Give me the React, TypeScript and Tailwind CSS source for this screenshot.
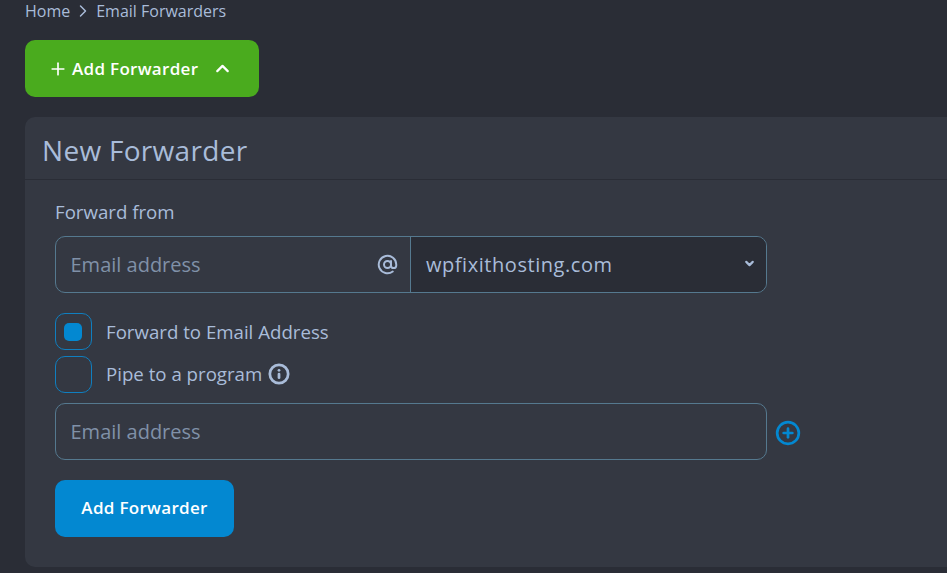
import React from 'react';
import { ChevronRight, ChevronUp, ChevronDown, Plus, AtSign, Info, CirclePlus } from 'lucide-react';

const font = "font-['Open_Sans',sans-serif]";

const RadioBox: React.FC<{ checked?: boolean; label: string; labelClass?: string; children?: React.ReactNode }> = ({ checked, label, labelClass, children }) => (
  <div className="flex items-center h-[37px]">
    <div className="w-[37px] h-[37px] rounded-[10px] border border-[#0f7fc0] flex items-center justify-center">
      {checked && <div className="w-[18px] h-[18px] mr-[1px] rounded-[5px] bg-[#0388d1]" />}
    </div>
    <span className={`ml-[14px] text-[18.67px] leading-[24px] text-[#a9bcd9] ${labelClass ?? ''}`}>{label}</span>
    {children}
  </div>
);

export default function App() {
  return (
    <div className={`${font} w-[947px] h-[573px] overflow-hidden bg-[#2a2d36] pl-[25px]`}>
      <div className="flex items-center h-[22px] text-[16px] leading-[22px] text-[#a9bcd9]">
        <span>Home</span>
        <ChevronRight className="w-[20px] h-[20px] mx-[3px]" strokeWidth={1.75} />
        <span>Email Forwarders</span>
      </div>

      <button className="mt-[18px] w-[234px] h-[57px] rounded-[10px] bg-[#4aab1e] flex items-center pl-[23px] text-white text-[17px] tracking-[0.3px] font-semibold">
        <Plus className="w-[20px] h-[20px] mr-[4px]" strokeWidth={2} />
        <span>Add Forwarder</span>
        <ChevronUp className="w-[21px] h-[21px] ml-[14px]" strokeWidth={2.5} />
      </button>

      <div className="mt-[20px] w-[1000px] h-[450px] rounded-[10px] bg-[#343842]">
        <div className="h-[63px] pl-[17px] pt-[3px] flex items-center border-b border-[#2a2d36]">
          <h2 className="text-[28px] tracking-[0.3px] leading-[34px] text-[#a9bcd9]">New Forwarder</h2>
        </div>
        <div className="pl-[30px] pt-[20px]">
          <div className="text-[18.67px] leading-[24px] text-[#a9bcd9]">Forward from</div>
          <div className="mt-[12px] w-[712px] h-[57px] flex rounded-[10px] border border-[#55798f] overflow-hidden">
            <div className="w-[355px] flex items-center pl-[14.5px] pr-[12px] border-r border-[#55798f]">
              <span className="flex-1 text-[20px] text-[#8091a8]">Email address</span>
              <AtSign className="w-[21px] h-[21px] text-[#a9bcd9]" strokeWidth={2.25} />
            </div>
            <div className="flex-1 flex items-center justify-between bg-[#2a2d36] pl-[15px] pr-[10px]">
              <span className="text-[20px] text-[#a9bcd9] tracking-[0.55px]">wpfixithosting.com</span>
              <ChevronDown className="w-[13px] h-[13px] mb-[3px] text-[#a9bcd9]" strokeWidth={4} />
            </div>
          </div>

          <div className="mt-[20px] flex flex-col gap-[6px]">
            <RadioBox checked label="Forward to Email Address" />
            <RadioBox label="Pipe to a program" labelClass="mb-[2px]">
              <Info className="w-[22px] h-[22px] ml-[6px] mb-[2px] text-[#a9bcd9]" strokeWidth={3} />
            </RadioBox>
          </div>

          <div className="mt-[10px] flex items-center">
            <div className="w-[712px] h-[57px] rounded-[10px] border border-[#55798f] flex items-center pl-[14.5px]">
              <span className="text-[20px] text-[#8091a8]">Email address</span>
            </div>
            <CirclePlus className="ml-[8px] mt-[2px] w-[26px] h-[26px] text-[#0388d1]" strokeWidth={2.5} />
          </div>

          <button className="mt-[20px] w-[179px] h-[57px] pb-[2px] rounded-[10px] bg-[#0388d1] text-white text-[17px] tracking-[0.3px] font-semibold">
            Add Forwarder
          </button>
        </div>
      </div>
    </div>
  );
}
